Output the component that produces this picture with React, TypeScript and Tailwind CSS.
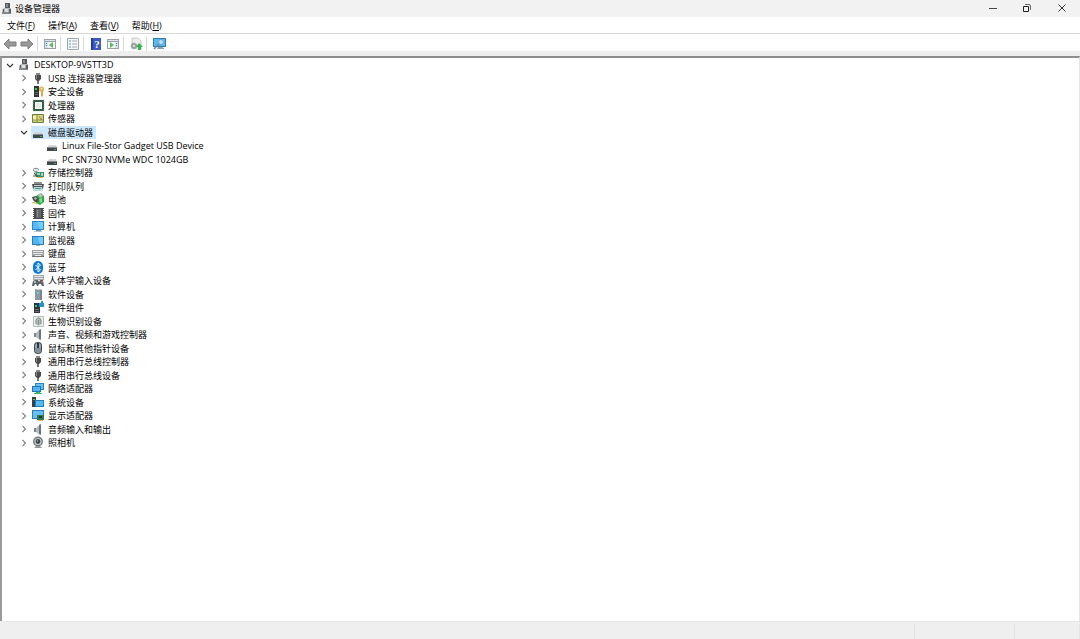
import { useState } from "react";
import type { ReactNode } from "react";
import clsx from "clsx";

type IconName = keyof typeof icons;

type Device = {
  name: string;
  icon: IconName;
  children?: Device[];
};

const icons = {
  computerRoot: (
    <>
      <path d="M5 1h5v6H5z" fill="#55595b" />
      <path d="M6 2h2v3H6z" fill="#8b8f91" />
      <path d="M2 8l2-2h7v6H2z" fill="#b4b8ba" />
      <path d="M2 10h9v2H2z" fill="#85898c" />
      <path d="M3 7h1v3H3zM9 7h2v4H9z" fill="#5b6063" />
      <path d="M5 7h3v3H5z" fill="#dcdfe0" />
    </>
  ),
  usb: (
    <>
      <path d="M5 1h4v3H5z" fill="#888" />
      <path d="M4 3h6v4L8 9H6L4 7z" fill="#4a4a4a" />
      <path d="M5 3h1v4H5z" fill="#8c8c8c" />
      <path d="M6 9h2v3H6z" fill="#777" />
    </>
  ),
  security: (
    <>
      <path d="M3 1h5v11H3z" fill="#2f3437" />
      <path d="M4 3h2v2H4z" fill="#35c85a" />
      <path d="M4 7h3v1H4zM4 9h3v1H4z" fill="#666" />
      <circle cx="10.500" cy="4" r="2.600" fill="#e6b552" />
      <circle cx="10.500" cy="3.500" r=".8" fill="#fff" />
      <path d="M10 6h2v5l-1 1-1-1z" fill="#dba84b" />
    </>
  ),
  cpu: (
    <>
      <path d="M2 1h11v11H2z" fill="#2a5a45" />
      <path d="M2 1h11v11H2z" fill="none" stroke="#a9b98a" strokeDasharray="1 1" strokeWidth=".6" />
      <path d="M4 3h7v7H4z" fill="#f8faf8" />
      <path d="M5 4h5v5H5z" fill="#e6ebe7" />
    </>
  ),
  sensor: (
    <>
      <rect x="1" y="2" width="12" height="9" rx="1" fill="#6c7d45" />
      <path d="M2 3h10v7H2z" fill="#d8d27a" />
      <path d="M2 4h3v4H2zM9 4h3v2H9z" fill="#f7f0a8" />
      <path d="M6 3v7M2 8h10M8 5h4" stroke="#7d8b44" strokeWidth=".8" />
      <circle cx="10" cy="7" r="1" fill="#d46b4a" />
    </>
  ),
  disk: (
    <>
      <path d="M4 6h7l1 3H2z" fill="#d3d5d6" />
      <path d="M2 8h10v4H2z" fill="#43484b" />
      <path d="M2 8h10v1H2z" fill="#85898b" />
      <path d="M9 10h2v1H9z" fill="#3fae5c" />
    </>
  ),
  storage: (
    <>
      <path d="M2 4c0-3 6-3 6 0L5 7 2 5z" fill="#8e9799" />
      <path d="M3 3h4v2H3z" fill="#dfe4e4" />
      <path d="M5 6h8v5H5z" fill="#35916a" />
      <path d="M6 7h3v2H6zM10 7h2v3h-2z" fill="#a8d8b8" />
      <path d="M3 7l4 4M2 10h3" stroke="#555" strokeWidth="1.2" />
      <path d="M7 11h5v1H7z" fill="#d9b34e" />
    </>
  ),
  printer: (
    <>
      <path d="M3 2h8v3H3z" fill="#8a8f92" />
      <path d="M1 4h12l-1 5H2z" fill="#515659" />
      <path d="M3 5h8v1H3z" fill="#c2c7c9" />
      <path d="M3 7h8l1 4H2z" fill="#b9dcd8" />
      <path d="M4 8h6v1H4z" fill="#4b9d90" />
    </>
  ),
  battery: (
    <>
      <path d="M5 3l5-3 3 3v6l-4 3-4-2z" fill="#34a94b" />
      <path d="M7 2l3-2 2 3-3 2z" fill="#b5c0b7" />
      <path d="M8 6l3-1v4l-2 1z" fill="#7de07f" />
      <path d="M1 4l4-1 3 3-1 3H4L2 7z" fill="#4a4f4d" />
      <path d="M3 5l2-1 1 2-2 1z" fill="#abb2ae" />
      <path d="M1 10q3-1 5 1" fill="none" stroke="#e0b942" strokeWidth="1.2" />
    </>
  ),
  firmware: (
    <>
      <path d="M3 1h9v11H3z" fill="#484b4d" />
      <path d="M2.500 1v11M12.500 1v11" stroke="#555" strokeDasharray="1 1" />
      <path d="M5 2h5v9H5z" fill="#65696b" />
      <path d="M6 3h1v7H6z" fill="#8b8e90" />
    </>
  ),
  computer: (
    <>
      <path d="M1 1h12v9H1z" fill="#2588cf" />
      <path d="M2 2h10v7H2z" fill="#55baf5" />
      <path d="M6 2h6v7H9z" fill="#78cdfb" />
      <path d="M5 10h5v1H5z" fill="#6d95ad" />
      <path d="M3 11h8v1H3z" fill="#b5c5ce" />
    </>
  ),
  monitor: (
    <>
      <path d="M1 2h12v9H1z" fill="#2c7db5" />
      <path d="M2 3h10v7H2z" fill="#4fb5f2" />
      <path d="M7 3h5v7H9z" fill="#78cdfb" />
      <path d="M5 11h4v1H5z" fill="#9cb4c2" />
    </>
  ),
  keyboard: (
    <>
      <path d="M1 3h12v7H1z" fill="#9b9fa1" />
      <path d="M2 4h10v1H2zM2 6h10v1H2zM4 8h6v1H4z" fill="#e6e9ea" />
      <path d="M1 9h12v1H1z" fill="#6f7375" />
    </>
  ),
  bluetooth: (
    <>
      <rect x="2" y="0" width="10" height="13" rx="5" fill="#0a7bdc" />
      <path d="M4.500 4l5 5L7 11V2l2.500 2-5 5" fill="none" stroke="#fff" strokeWidth="1" />
    </>
  ),
  hid: (
    <>
      <path d="M2 1h11v5H2z" fill="#a3a8ab" />
      <path d="M3 2h9v1H3zM3 4h9v1H3z" fill="#e1e4e5" />
      <path d="M1 12l1-5 2-1h3l1 2 1-2h3l1 6h-2l-1-2H8l-1 2H6l-1-2H4l-1 2z" fill="#596167" />
      <circle cx="4" cy="8" r="1" fill="#c5d6e1" />
      <circle cx="11" cy="8" r="1" fill="#d0655b" />
    </>
  ),
  software: (
    <>
      <path d="M4 1h6l1 1v10H4z" fill="#8e989d" />
      <path d="M5 1h5v1H5z" fill="#c5cbce" />
      <path d="M9 2h2v10H9z" fill="#7c868b" />
      <path d="M6 4h2v2H6z" fill="#4ed4ef" />
    </>
  ),
  component: (
    <>
      <path d="M3 2h6v10H3z" fill="#303538" />
      <path d="M4 4h2v2H4z" fill="#32c960" />
      <path d="M4 8h4v1H4zM4 10h4v1H4z" fill="#6b7073" />
      <path d="M8 2h2V0h2v2h1v4H8z" fill="#1f91dc" />
    </>
  ),
  biometric: (
    <>
      <path d="M2.500 1.500h10v10h-10z" fill="#edf2f0" stroke="#a9bfb9" />
      <ellipse cx="7.500" cy="6.500" rx="3" ry="4" fill="#b4bbb9" />
      <path d="M5 9V5q2.500-4 5 0v4M7.500 10V5" fill="none" stroke="#858e8c" />
    </>
  ),
  speaker: (
    <>
      <path d="M3 5h2v4H3z" fill="#7b858b" />
      <path d="M5 5l4-4v11L5 9z" fill="#b3bbc0" />
      <path d="M8 2l2-1v11l-2-1z" fill="#69747b" />
    </>
  ),
  mouse: (
    <>
      <rect x="3" y="0" width="8" height="12" rx="4" fill="#41494f" />
      <rect x="4" y="1" width="6" height="10" rx="3" fill="#98a9b5" />
      <path d="M4 6h6v2q-1 3-3 3T4 8z" fill="#7f909c" />
      <path d="M6 1h2v5H6z" fill="#31383d" />
    </>
  ),
  network: (
    <>
      <path d="M4 1h9v7H4z" fill="#2c86c3" />
      <path d="M5 2h7v5H5z" fill="#66c0f3" />
      <path d="M1 4h9v6H1z" fill="#1c75b6" />
      <path d="M2 5h7v4H2z" fill="#53b4f0" />
      <path d="M5 10h4v1h2v1H3v-1h2z" fill="#3bb55b" />
    </>
  ),
  system: (
    <>
      <path d="M1 1h4v10H1z" fill="#3a4145" />
      <path d="M2 3h2v1H2z" fill="#45d66d" />
      <path d="M4 4h9v7H4z" fill="#1d7fc2" />
      <path d="M5 5h7v5H5z" fill="#55b9f4" />
    </>
  ),
  display: (
    <>
      <path d="M1 1h12v9H1z" fill="#287dba" />
      <path d="M2 2h10v7H2z" fill="#66bff2" />
      <path d="M6 6h7v5H6z" fill="#2f7954" />
      <path d="M8 7h3v2H8z" fill="#263c32" />
      <path d="M7 11h5v1H7z" fill="#e2b93b" />
    </>
  ),
  camera: (
    <>
      <circle cx="7" cy="5.500" r="5" fill="#747b7f" />
      <circle cx="7" cy="5.500" r="3.600" fill="#c7cccf" />
      <circle cx="7" cy="5.500" r="2.400" fill="#3e464b" />
      <circle cx="6.500" cy="5" r=".8" fill="#98b1bf" />
      <path d="M5 10h4l2 2H3z" fill="#91989c" />
    </>
  ),
};

const devices: Device[] = [
  { name: "USB 连接器管理器", icon: "usb" },
  { name: "安全设备", icon: "security" },
  { name: "处理器", icon: "cpu" },
  { name: "传感器", icon: "sensor" },
  {
    name: "磁盘驱动器",
    icon: "disk",
    children: [
      { name: "Linux File-Stor Gadget USB Device", icon: "disk" },
      { name: "PC SN730 NVMe WDC 1024GB", icon: "disk" },
    ],
  },
  { name: "存储控制器", icon: "storage" },
  { name: "打印队列", icon: "printer" },
  { name: "电池", icon: "battery" },
  { name: "固件", icon: "firmware" },
  { name: "计算机", icon: "computer" },
  { name: "监视器", icon: "monitor" },
  { name: "键盘", icon: "keyboard" },
  { name: "蓝牙", icon: "bluetooth" },
  { name: "人体学输入设备", icon: "hid" },
  { name: "软件设备", icon: "software" },
  { name: "软件组件", icon: "component" },
  { name: "生物识别设备", icon: "biometric" },
  { name: "声音、视频和游戏控制器", icon: "speaker" },
  { name: "鼠标和其他指针设备", icon: "mouse" },
  { name: "通用串行总线控制器", icon: "usb" },
  { name: "通用串行总线设备", icon: "usb" },
  { name: "网络适配器", icon: "network" },
  { name: "系统设备", icon: "system" },
  { name: "显示适配器", icon: "display" },
  { name: "音频输入和输出", icon: "speaker" },
  { name: "照相机", icon: "camera" },
];

const menus = [
  { label: "文件", accessKey: "F" },
  { label: "操作", accessKey: "A" },
  { label: "查看", accessKey: "V" },
  { label: "帮助", accessKey: "H" },
];

const indents = ["pl-px", "pl-[15px]", "pl-[29px]"];

const DeviceIcon = ({ name }: { name: IconName }) => (
  <svg viewBox="0 0 14 13" className="w-[14px] h-[13px] shrink-0" aria-hidden="true">
    {icons[name]}
  </svg>
);

const ToolButton = ({ label, children }: { label: string; children: ReactNode }) => (
  <button type="button" aria-label={label} className="w-[17px] h-4 flex items-center justify-center">
    <svg viewBox="0 0 14 14" className="w-[14px] h-[14px]" aria-hidden="true">
      {children}
    </svg>
  </button>
);

const Divider = () => <span className="w-px h-[15px] ml-[2px] mr-[3px] bg-[#d8d8d8]" />;

const consolePane = (
  <>
    <path d="M1 2h12v10H1z" fill="#9aa3aa" />
    <path d="M2 3h10v1H2z" fill="#dce4ea" />
    <path d="M2 5h10v6H2z" fill="#f5f6f6" />
  </>
);

const arrow = "M1 7l5-5v3h7v4H6v3z";

const TitleBar = () => (
  <header className="h-[17px] flex items-center justify-between bg-[#f2f2f2]">
    <div className="flex items-center gap-px">
      <DeviceIcon name="computerRoot" />
      <h1>设备管理器</h1>
    </div>
    <div className="flex self-start">
      <button type="button" aria-label="最小化" className="w-[34px] h-4 flex items-center justify-center">
        <svg viewBox="0 0 10 10" className="w-[10px] h-[10px]">
          <path d="M1 5.500h8" stroke="#444" />
        </svg>
      </button>
      <button type="button" aria-label="向下还原" className="w-[34px] h-4 flex items-center justify-center">
        <svg viewBox="0 0 10 10" className="w-[10px] h-[10px]" fill="none" stroke="#222">
          <path d="M1.500 3.500h5v5h-5z" />
          <path d="M3 1.500h4q1.500 0 1.500 1.500v4" stroke="#666" />
        </svg>
      </button>
      <button type="button" aria-label="关闭" className="w-9 h-4 flex items-center justify-center">
        <svg viewBox="0 0 10 10" className="w-[10px] h-[10px]">
          <path d="M1.500 1.500l7 7M8.500 1.500l-7 7" stroke="#333" />
        </svg>
      </button>
    </div>
  </header>
);

const MenuBar = () => (
  <nav className="h-[17px] flex items-center gap-[13px] px-[7px] border-b border-[#d8d8d8]">
    {menus.map((menu) => (
      <button key={menu.accessKey} type="button">
        {menu.label}(<u>{menu.accessKey}</u>)
      </button>
    ))}
  </nav>
);

const Toolbar = () => (
  <div role="toolbar" className="h-[17px] flex items-center pl-px pt-[2px]">
    <ToolButton label="后退">
      <path d={arrow} fill="#9b9b9b" stroke="#7c7c7c" />
    </ToolButton>
    <ToolButton label="前进">
      <path d={arrow} fill="#9b9b9b" stroke="#7c7c7c" transform="matrix(-1 0 0 1 14 0)" />
    </ToolButton>
    <Divider />
    <ToolButton label="显示/隐藏控制台树">
      {consolePane}
      <path d="M2 5h3v6H2z" fill="#d5e4ee" />
      <path d="M3 6h1v1H3zM3 8h1v1H3z" fill="#4d83ad" />
      <path d="M10 5v6L6 8z" fill="#5cbb5a" />
    </ToolButton>
    <Divider />
    <ToolButton label="属性">
      <path d="M1.500 1.500h11v11h-11z" fill="#f4f7f9" stroke="#9ba8b1" />
      <path d="M3 4h2M3 7h2M3 10h2" stroke="#5a97c4" />
      <path d="M6 4h5M6 7h5M6 10h5" stroke="#a3adb4" />
    </ToolButton>
    <Divider />
    <ToolButton label="帮助">
      <path d="M2 1h10v12H2z" fill="#3b5ac0" />
      <path d="M2 1h2v12H2z" fill="#243d96" />
      <text x="8" y="11" textAnchor="middle" className="fill-white text-[11px] font-bold font-['Liberation_Serif',serif]">
        ?
      </text>
    </ToolButton>
    <ToolButton label="显示/隐藏操作窗格">
      {consolePane}
      <path d="M9 5h3v6H9z" fill="#d5e4ee" />
      <path d="M10 6h1v1h-1zM10 8h1v1h-1z" fill="#4d83ad" />
      <path d="M4 5v6l4-3z" fill="#5cbb5a" />
    </ToolButton>
    <Divider />
    <ToolButton label="扫描检测硬件改动">
      <path d="M3 1h6l3 3v7H3z" fill="#eceeef" stroke="#b7bcbf" strokeWidth=".8" />
      <circle cx="5" cy="9" r="3" fill="#9ba0a3" stroke="#a3a8ab" strokeDasharray="1 1" />
      <circle cx="5" cy="9" r="1" fill="#eee" />
      <path d="M10 6l4 4h-2v3H9v-3H7z" fill="#35b44a" />
    </ToolButton>
    <Divider />
    <ToolButton label="更新驱动程序">
      <path d="M1 1h13v9H1z" fill="#277fb9" />
      <path d="M2 2h11v7H2z" fill="#5ab8ee" />
      <circle cx="9" cy="5" r="2.500" fill="#b3e2fb" stroke="#7297ae" strokeWidth=".8" />
      <path d="M7 7l-5 5" stroke="#668397" strokeWidth="1.500" />
      <path d="M6 10h5v1h1v1H5z" fill="#87a4b5" />
    </ToolButton>
  </div>
);

type TreeRowProps = {
  device: Device;
  level: number;
  expanded?: boolean;
  selected?: boolean;
  onToggle?: () => void;
  onSelect: () => void;
};

const TreeRow = ({ device, level, expanded, selected, onToggle, onSelect }: TreeRowProps) => (
  <li
    role="treeitem"
    aria-level={level + 1}
    aria-expanded={expanded}
    aria-selected={selected}
    className={clsx("flex items-center odd:h-[13px] even:h-[14px]", indents[level])}
  >
    {onToggle ? (
      <button
        type="button"
        aria-label={device.name}
        onClick={onToggle}
        className="w-[14px] h-[13px] flex items-center justify-center shrink-0"
      >
        <svg viewBox="0 0 8 8" className="w-2 h-2" fill="none" stroke={expanded ? "#333" : "#808080"}>
          <path d={expanded ? "M1 3l3 3 3-3" : "M2.500 1l3 3-3 3"} strokeWidth="1.100" />
        </svg>
      </button>
    ) : (
      <span className="w-[14px]" />
    )}
    <button
      type="button"
      onClick={onSelect}
      className={clsx(
        "h-[13px] flex items-center gap-[3px] whitespace-nowrap pr-[3px]",
        selected && "bg-[#cce8ff]"
      )}
    >
      <DeviceIcon name={device.icon} />
      <span>{device.name}</span>
    </button>
  </li>
);

const DeviceTree = () => {
  const root: Device = { name: "DESKTOP-9V5TT3D", icon: "computerRoot" };
  const [open, setOpen] = useState<string[]>([root.name, "磁盘驱动器"]);
  const [selected, setSelected] = useState("磁盘驱动器");

  const toggle = (name: string) =>
    setOpen((prev) => (prev.includes(name) ? prev.filter((n) => n !== name) : [...prev, name]));

  // flat list, so that the row heights alternate over all levels
  const rows: { device: Device; level: number }[] = [{ device: root, level: 0 }];
  if (open.includes(root.name)) {
    devices.forEach((device) => {
      rows.push({ device, level: 1 });
      if (open.includes(device.name)) {
        device.children?.forEach((child) => rows.push({ device: child, level: 2 }));
      }
    });
  }

  return (
    <ul role="tree" className="flex flex-col">
      {rows.map(({ device, level }) => (
        <TreeRow
          key={device.name}
          device={device}
          level={level}
          expanded={level < 2 ? open.includes(device.name) : undefined}
          selected={selected === device.name}
          onToggle={level < 2 ? () => toggle(device.name) : undefined}
          onSelect={() => setSelected(device.name)}
        />
      ))}
    </ul>
  );
};

export default function App() {
  return (
    <div className="min-h-screen flex flex-col bg-white text-black text-[9px] leading-[13px] font-['Open_Sans','Noto_Sans_CJK_SC',sans-serif]">
      <TitleBar />
      <MenuBar />
      <Toolbar />
      <main className="flex-1 flex flex-col border-t-[5px] border-[#eeeeee]">
        <div className="flex-1 border-t-2 border-l-2 border-r border-t-[#8e8e8e] border-l-[#9a9a9a] border-r-[#e3e3e3]">
          <DeviceTree />
        </div>
      </main>
      <footer className="h-[18px] flex justify-end border-t border-[#e5e5e5] bg-[#efefef] pt-[2px]">
        <span className="w-[100px] border-l border-[#e3e3e3]" />
        <span className="w-[66px] border-x border-[#e3e3e3]" />
      </footer>
    </div>
  );
}
